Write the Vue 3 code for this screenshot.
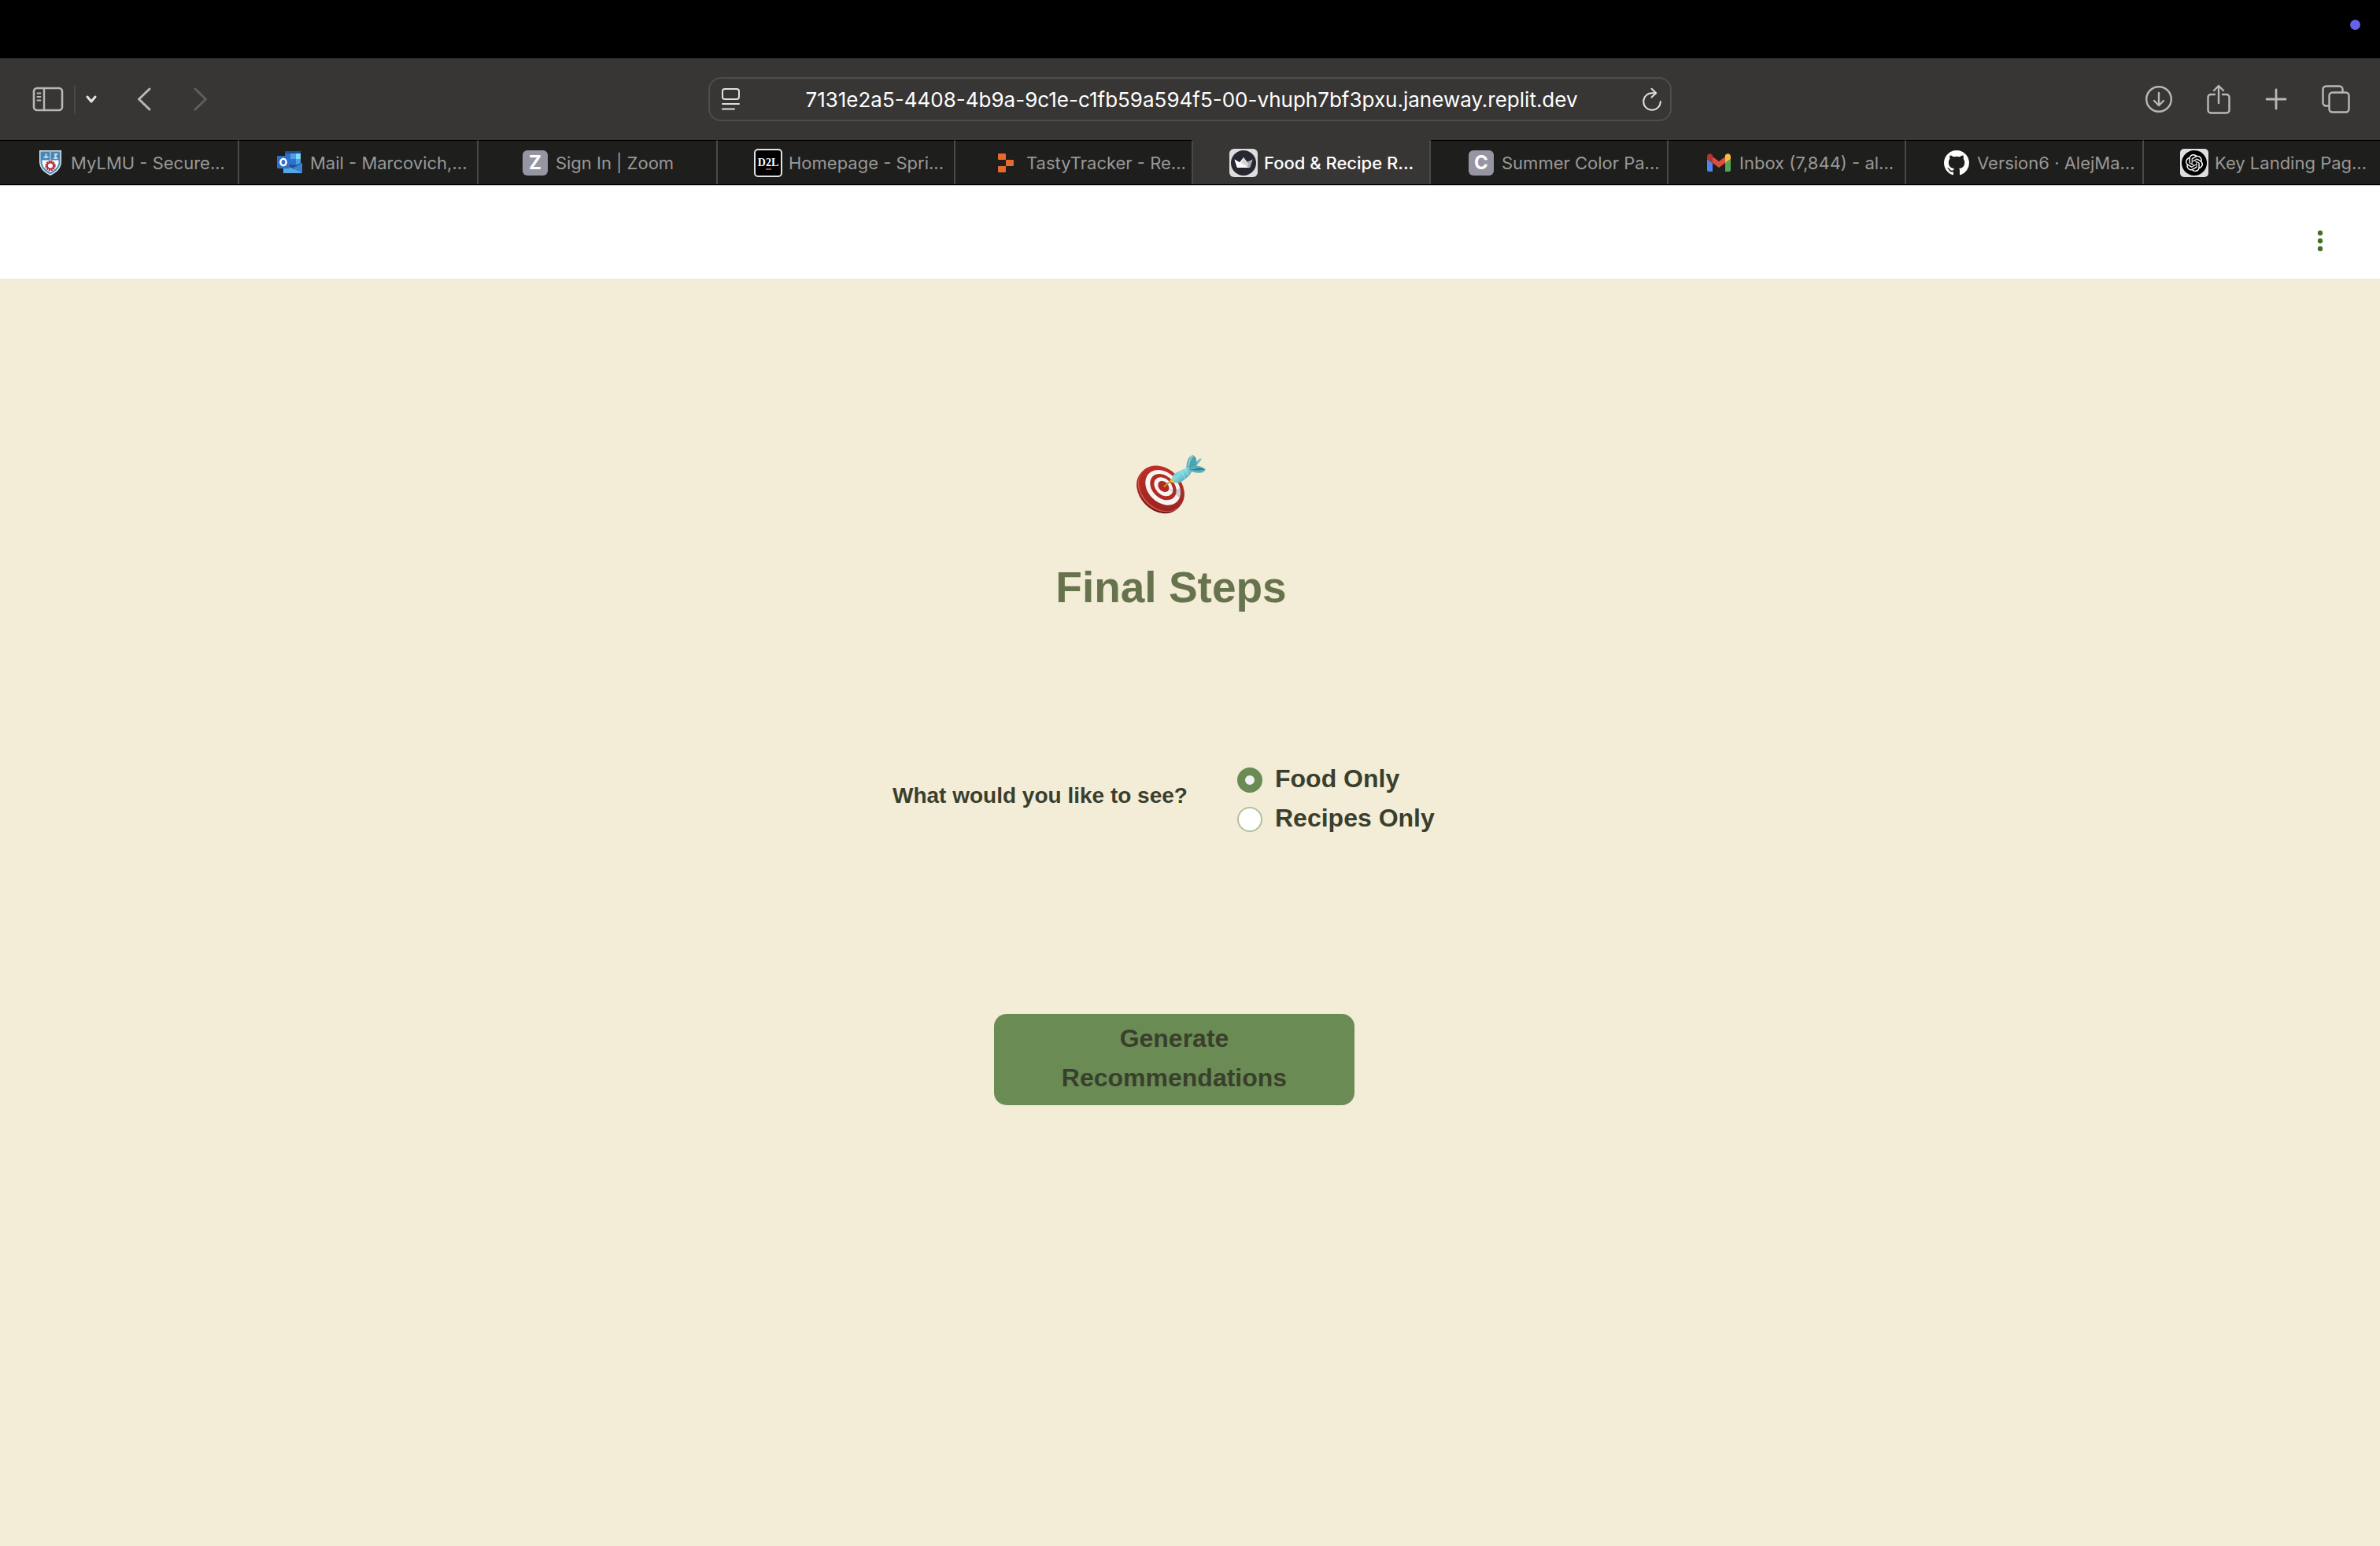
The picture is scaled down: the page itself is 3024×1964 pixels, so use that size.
<script setup>
import { ref } from 'vue'

const address = ref('7131e2a5-4408-4b9a-9c1e-c1fb59a594f5-00-vhuph7bf3pxu.janeway.replit.dev')
const choice = ref('food')

const tabs = [
  { icon: 'lmu', title: 'MyLMU - Secure...' },
  { icon: 'outlook', title: 'Mail - Marcovich,...' },
  { icon: 'letter', letter: 'Z', title: 'Sign In | Zoom', centered: true },
  { icon: 'd2l', title: 'Homepage - Spri...' },
  { icon: 'replit', title: 'TastyTracker - Re...' },
  { icon: 'crown', title: 'Food & Recipe R...', active: true },
  { icon: 'letter', letter: 'C', title: 'Summer Color Pa...' },
  { icon: 'gmail', title: 'Inbox (7,844) - al...' },
  { icon: 'github', title: 'Version6 · AlejMa...' },
  { icon: 'openai', title: 'Key Landing Pag...' },
]

const options = [
  { value: 'food', label: 'Food Only' },
  { value: 'recipes', label: 'Recipes Only' },
]
</script>

<template>
  <div class="screen">
    <div class="menubar"><span class="indicator"></span></div>

    <header class="toolbar">
      <div class="tools">
        <button class="tool" type="button" aria-label="Show sidebar">
          <svg width="40" height="32" viewBox="0 0 40 32" fill="none" stroke="#b9b8b6" stroke-width="2.6" stroke-linecap="round">
            <rect x="2" y="2" width="36" height="28" rx="4" />
            <path d="M15 2v28" stroke-width="2.4" />
            <path d="M6.500 8.500h4M6.500 13h4M6.500 17.500h4" stroke-width="1.900" />
          </svg>
        </button>
        <span class="rule"></span>
        <button class="tool caret" type="button" aria-label="Tab groups">
          <svg width="16" height="12" viewBox="0 0 16 12" fill="none" stroke="#e4e3e2" stroke-width="3" stroke-linecap="round" stroke-linejoin="round">
            <path d="M3 3l5 6 5-6" />
          </svg>
        </button>
        <button class="tool back" type="button" aria-label="Back">
          <svg width="20" height="32" viewBox="0 0 20 32" fill="none" stroke="#b9b8b6" stroke-width="3" stroke-linecap="round" stroke-linejoin="round">
            <path d="M17 3L3.500 16 17 29" />
          </svg>
        </button>
        <button class="tool forward" type="button" aria-label="Forward">
          <svg width="20" height="32" viewBox="0 0 20 32" fill="none" stroke="#5f5e5c" stroke-width="3" stroke-linecap="round" stroke-linejoin="round">
            <path d="M3 3l13.500 13L3 29" />
          </svg>
        </button>
      </div>

      <div class="field">
        <svg width="26" height="30" viewBox="0 0 26 30" fill="none" stroke="#e0dfde" stroke-width="2" stroke-linecap="round">
          <rect x="2" y="2" width="21" height="13" rx="3" />
          <path d="M2 21h21M2 27.500h15" />
        </svg>
        <input v-model="address" class="address" type="text" aria-label="Address" spellcheck="false" />
        <button class="tool" type="button" aria-label="Reload">
          <svg width="26" height="30" viewBox="0 0 26 30" fill="none" stroke="#e0dfde" stroke-width="2" stroke-linecap="round" stroke-linejoin="round">
            <path d="M17 7.200H13a10.800 10.800 0 1 0 10.800 10.800" />
            <path d="M12.500 1.800l5.700 5.400-5.700 5.400" />
          </svg>
        </button>
      </div>

      <div class="tools end">
        <button class="tool" type="button" aria-label="Downloads">
          <svg width="34" height="36" viewBox="1 0 34 36" fill="none" stroke="#b9b8b6" stroke-width="2.400" stroke-linecap="round" stroke-linejoin="round">
            <circle cx="18" cy="18" r="15.800" />
            <path d="M18 10v15.500M12 20l6 6 6-6" />
          </svg>
        </button>
        <button class="tool" type="button" aria-label="Share">
          <svg width="32" height="40" viewBox="0 0 32 40" fill="none" stroke="#b9b8b6" stroke-width="2.400" stroke-linecap="round" stroke-linejoin="round">
            <path d="M11 14H6a3.500 3.500 0 0 0-3.500 3.500V34A3.500 3.500 0 0 0 6 37.500h20a3.500 3.500 0 0 0 3.500-3.500V17.500A3.500 3.500 0 0 0 26 14h-5" />
            <path d="M16 25V3M10 9l6-6 6 6" />
          </svg>
        </button>
        <button class="tool" type="button" aria-label="New tab">
          <svg width="28" height="28" viewBox="0 0 28 28" fill="none" stroke="#b9b8b6" stroke-width="2.800" stroke-linecap="round">
            <path d="M14 2v24M2 14h24" />
          </svg>
        </button>
        <button class="tool" type="button" aria-label="Tab overview">
          <svg width="38" height="38" viewBox="0 0 38 38" fill="none" stroke="#b9b8b6" stroke-width="2.400" stroke-linejoin="round">
            <rect x="10.500" y="10.500" width="25" height="25" rx="4" />
            <path d="M10.500 27.500H6.500a4 4 0 0 1-4-4V6.500a4 4 0 0 1 4-4h17a4 4 0 0 1 4 4v4" />
          </svg>
        </button>
      </div>
    </header>

    <nav class="tabs" aria-label="Open tabs">
      <a
        v-for="tab in tabs"
        :key="tab.title"
        href="#"
        class="tab"
        :class="{ active: tab.active, centered: tab.centered }"
      >
        <span class="favicon">
          <svg v-if="tab.icon === 'lmu'" width="28" height="32" viewBox="0 0 28 32">
            <path d="M0 0h28v14c0 9-6 14-14 18C6 28 0 23 0 14z" fill="#dce7ef" />
            <path d="M1.500 1.500h25V14c0 8-5.500 12.700-12.500 16.300C7 26.700 1.500 22 1.500 14z" fill="#4685b8" />
            <path d="M3.500 12.500h21V14c0 7-4.700 10.900-10.500 14.100C8.200 24.900 3.500 21 3.500 14z" fill="#fff" />
            <path d="M14 2v11" stroke="#dce7ef" />
            <path d="M8.500 4v6M5.500 8.500h6M19 5h3l-2 2 2 3h-4" stroke="#c6dcec" stroke-width="1.800" fill="none" />
            <circle cx="14" cy="19.500" r="5.200" fill="#fff" stroke="#ac3543" stroke-width="3" stroke-dasharray="2 .7" />
            <circle cx="14" cy="19.500" r="4" fill="none" stroke="#ac3543" stroke-width="2" />
          </svg>
          <svg v-else-if="tab.icon === 'outlook'" width="32" height="34" viewBox="0 -2 32 34">
            <path d="M10 0h20v18H10z" fill="#2b6fc8" />
            <path d="M10 0h20v3H10z" fill="#214f94" />
            <path d="M17 3h7v7h-7zM24 10h6v7h-6z" fill="#4da0e8" />
            <path d="M24 3h6v7h-6z" fill="#7fdcfc" />
            <path d="M17 10h7v6h-7z" fill="#2b74cf" />
            <path d="M8 15l12 7 12-7v13H8z" fill="#52a7e8" />
            <path d="M15 17l6 6 11-7-2-1-9 4-5-3z" fill="#2459a8" />
            <path d="M20 22l12-7v13z" fill="#3a85cf" />
            <rect x="0" y="6" width="16" height="16" rx="1" fill="#2f6fc9" />
            <ellipse cx="8" cy="14" rx="3.600" ry="4.200" fill="none" stroke="#fff" stroke-width="2.500" />
          </svg>
          <span v-else-if="tab.icon === 'letter'" class="letter">{{ tab.letter }}</span>
          <span v-else-if="tab.icon === 'd2l'" class="d2l">D<span class="two">2</span>L</span>
          <svg v-else-if="tab.icon === 'replit'" width="20" height="24" viewBox="0 0 20 24" fill="#e56a2b">
            <path d="M1 0h8q1 0 1 1v7H1Q0 8 0 7V1q0-1 1-1zM10 8h9q1 0 1 1v6q0 1-1 1h-9zM1 16h9v7q0 1-1 1H1q-1 0-1-1v-6q0-1 1-1z" />
          </svg>
          <svg v-else-if="tab.icon === 'crown'" width="36" height="36" viewBox="0 0 36 36">
            <rect width="36" height="36" rx="6" fill="#dededf" />
            <circle cx="18" cy="18" r="16" fill="#262730" />
            <path d="M6.500 13.500l6 4.500 5.500-7 5.500 7 6-4.500-3.500 10.500H10z" fill="#fff" />
            <path d="M29.500 13.500L26 24h-4.500l-3.500-5z" fill="#a9aaae" />
            <path d="M18 11l5.500 7 1 2-3 4-7-4.500z" fill="#d5d5d7" />
            <path d="M6.500 13.500L18 20l7 4H10z" fill="#fff" />
          </svg>
          <svg v-else-if="tab.icon === 'gmail'" width="30" height="23" viewBox="0 0 30 23">
            <path d="M0 7l7 5v11H2q-2 0-2-2z" fill="#4f83ee" />
            <path d="M30 7l-7 5v11h5q2 0 2-2z" fill="#54a557" />
            <path d="M7 4l8 6 8-6v8l-8 6-8-6z" fill="#dc4c3f" />
            <path d="M0 7V4C0 0 4-1 7 2v10z" fill="#b8352b" />
            <path d="M30 7V4c0-4-4-5-7-2v10z" fill="#f3bf42" />
          </svg>
          <svg v-else-if="tab.icon === 'github'" width="32" height="32" viewBox="0 0 16 16" fill="#fff">
            <path d="M8 0C3.580 0 0 3.580 0 8c0 3.540 2.290 6.530 5.470 7.590.4.070.55-.17.55-.38 0-.19-.01-.82-.01-1.490-2.010.37-2.530-.49-2.690-.94-.09-.23-.48-.94-.82-1.130-.28-.15-.68-.52-.01-.53.63-.01 1.080.58 1.230.82.72 1.210 1.870.87 2.330.66.07-.52.28-.87.51-1.070-1.780-.2-3.640-.89-3.640-3.950 0-.87.31-1.590.82-2.150-.08-.2-.36-1.020.08-2.120 0 0 .67-.21 2.200.82.64-.18 1.320-.27 2-.27s1.360.09 2 .27c1.530-1.040 2.200-.82 2.200-.82.44 1.100.16 1.920.08 2.120.51.56.82 1.270.82 2.150 0 3.070-1.870 3.750-3.650 3.950.29.25.54.73.54 1.480 0 1.070-.01 1.930-.01 2.200 0 .21.15.46.55.38A8.010 8.010 0 0 0 16 8c0-4.420-3.580-8-8-8z" />
          </svg>
          <svg v-else width="36" height="36" viewBox="0 0 36 36">
            <rect width="36" height="36" rx="5" fill="#dededf" />
            <circle cx="18" cy="18" r="16" fill="#000" />
            <path transform="translate(7 7) scale(.92)" fill="#fff" d="M22.2819 9.8211a5.9847 5.9847 0 0 0-.5157-4.9108 6.0462 6.0462 0 0 0-6.5098-2.9A6.0651 6.0651 0 0 0 4.9807 4.1818a5.9847 5.9847 0 0 0-3.9977 2.9 6.0462 6.0462 0 0 0 .7427 7.0966 5.98 5.98 0 0 0 .511 4.9107 6.051 6.051 0 0 0 6.5146 2.9001A5.9847 5.9847 0 0 0 13.2599 24a6.0557 6.0557 0 0 0 5.7718-4.2058 5.9894 5.9894 0 0 0 3.9977-2.9001 6.0557 6.0557 0 0 0-.7475-7.0729zm-9.022 12.6081a4.4755 4.4755 0 0 1-2.8764-1.0408l.1419-.0804 4.7783-2.7582a.7948.7948 0 0 0 .3927-.6813v-6.7369l2.02 1.1686a.071.071 0 0 1 .038.052v5.5826a4.504 4.504 0 0 1-4.4945 4.4944zm-9.6607-4.1254a4.4708 4.4708 0 0 1-.5346-3.0137l.142.0852 4.783 2.7582a.7712.7712 0 0 0 .7806 0l5.8428-3.3685v2.3324a.0804.0804 0 0 1-.0332.0615L9.74 19.9502a4.4992 4.4992 0 0 1-6.1408-1.6464zM2.3408 7.8956a4.485 4.485 0 0 1 2.3655-1.9728V11.6a.7664.7664 0 0 0 .3879.6765l5.8144 3.3543-2.0201 1.1685a.0757.0757 0 0 1-.071 0l-4.8303-2.7865A4.504 4.504 0 0 1 2.3408 7.872zm16.5963 3.8558L13.1038 8.364 15.1192 7.2a.0757.0757 0 0 1 .071 0l4.8303 2.7913a4.4944 4.4944 0 0 1-.6765 8.1042v-5.6772a.79.79 0 0 0-.407-.667zm2.0107-3.0231l-.142-.0852-4.7735-2.7818a.7759.7759 0 0 0-.7854 0L9.409 9.2297V6.8974a.0662.0662 0 0 1 .0284-.0615l4.8303-2.7866a4.4992 4.4992 0 0 1 6.6802 4.66zM8.3065 12.863l-2.02-1.1638a.0804.0804 0 0 1-.038-.0567V6.0742a4.4992 4.4992 0 0 1 7.3757-3.4537l-.142.0805L8.704 5.459a.7948.7948 0 0 0-.3927.6813zm1.0976-2.3654l2.602-1.4998 2.6069 1.4998v2.9994l-2.5974 1.4997-2.6067-1.4997Z" />
          </svg>
        </span>
        <span class="title">{{ tab.title }}</span>
      </a>
    </nav>

    <div class="appbar">
      <button class="kebab" type="button" aria-label="Main menu">
        <svg width="8" height="28" viewBox="0 0 8 28" fill="#447026">
          <circle cx="4" cy="4" r="3.200" />
          <circle cx="4" cy="14" r="3.200" />
          <circle cx="4" cy="24" r="3.200" />
        </svg>
      </button>
    </div>

    <main class="page">
      <svg class="target" width="88" height="76" viewBox="0 0 264 228" role="img" aria-label="Direct hit">
        <defs>
          <linearGradient id="face" x1="0" y1="0" x2="1" y2="1">
            <stop offset="0" stop-color="#c93027" />
            <stop offset="1" stop-color="#932420" />
          </linearGradient>
          <linearGradient id="side" x1="0" y1="0" x2="1" y2="0">
            <stop offset="0" stop-color="#b3261f" />
            <stop offset="1" stop-color="#5f1210" />
          </linearGradient>
          <linearGradient id="barrel" x1="0" y1="0" x2="1" y2="1">
            <stop offset="0" stop-color="#56aebd" />
            <stop offset=".4" stop-color="#85dbe3" />
            <stop offset="1" stop-color="#3b8797" />
          </linearGradient>
        </defs>
        <ellipse cx="88" cy="135" rx="98" ry="76" transform="rotate(45 88 135)" fill="url(#side)" />
        <ellipse cx="93" cy="130" rx="98" ry="76" transform="rotate(45 93 130)" fill="#d0584d" />
        <ellipse cx="96" cy="127" rx="97" ry="75" transform="rotate(45 96 127)" fill="url(#face)" />
        <ellipse cx="101" cy="124" rx="76" ry="57" transform="rotate(45 101 124)" fill="#f6f5f4" />
        <ellipse cx="102" cy="122" rx="57" ry="42" transform="rotate(45 102 122)" fill="#b32a24" />
        <ellipse cx="103" cy="121" rx="41" ry="30" transform="rotate(45 103 121)" fill="#f6f5f4" />
        <ellipse cx="103" cy="120" rx="24" ry="18" transform="rotate(45 103 120)" fill="#b32a24" />
        <path d="M112 122l28 12 30-8 6 24-14 12-22-22z" fill="#555" opacity=".25" />
        <path d="M106 120l30-26" stroke="#c99f22" stroke-width="5" stroke-linecap="round" />
        <path d="M128 97l8-11 18 15-12 6-9-2z" fill="#e4c62f" />
        <path d="M207 60l6 0 34-42q1-6-6-4l-38 34z" fill="#6fb9c4" />
        <path d="M190 49Q192 6 216 1q18 8 12 44l-20 14z" fill="#4fa2af" />
        <path d="M197 44Q200 16 216 1" stroke="#7fd0d9" stroke-width="7" fill="none" />
        <path d="M137 84q2-12 22-20l38-18 14 18q-10 20-40 38-14 9-26 2-10-8-8-20z" fill="url(#barrel)" />
        <path d="M168 62q10 4 16 28M182 54q10 4 15 24" stroke="#b4edf0" stroke-width="3" opacity=".7" fill="none" />
        <path d="M199 56q22-20 42-13 14 4 22 12-6 18-40 12-14-2-24-11z" fill="#5bb2be" />
        <path d="M201 56q20-2 30-6 16-2 32 5-30 6-62 1z" fill="#347f8d" />
      </svg>
      <h1>Final Steps</h1>

      <form class="form" @submit.prevent>
        <div class="question" role="radiogroup" aria-labelledby="view-prompt">
          <span id="view-prompt" class="prompt">What would you like to see?</span>
          <div class="options">
            <label v-for="option in options" :key="option.value" class="option">
              <input v-model="choice" type="radio" name="view" :value="option.value" />
              <span class="caption">{{ option.label }}</span>
            </label>
          </div>
        </div>
        <button class="generate" type="submit">Generate Recommendations</button>
      </form>
    </main>
  </div>
</template>

<style>
body {
  margin: 0;
  background: #f3ecd7;
}
</style>

<style scoped>
.screen {
  display: flex;
  flex-direction: column;
  min-height: 100vh;
  font-family: "Liberation Sans", Arial, sans-serif;
}

button {
  margin: 0;
  padding: 0;
  border: 0;
  background: none;
  font: inherit;
}

svg {
  display: block;
}

.menubar {
  display: flex;
  justify-content: flex-end;
  align-items: flex-end;
  box-sizing: border-box;
  height: 74px;
  padding: 0 25px 36px 0;
  background: #000;
}

.indicator {
  width: 13px;
  height: 13px;
  border-radius: 50%;
  background: #6562ea;
}

.toolbar {
  display: grid;
  grid-template-columns: 1fr minmax(0, 1224px) 1fr;
  align-items: center;
  height: 104px;
  background: #383634;
}

.tools {
  display: flex;
  align-items: center;
  padding-left: 41px;
}

.tools.end {
  justify-content: flex-end;
  gap: 43px;
  padding: 0 37px 0 0;
}

.rule {
  width: 2px;
  height: 36px;
  margin: 0 12px 0 13px;
  background: #4a4846;
}

.back {
  margin-left: 49px;
}

.forward {
  margin-left: 52px;
}

.field {
  display: flex;
  align-items: center;
  box-sizing: border-box;
  height: 56px;
  padding: 0 10px 0 14px;
  border: 2px solid #4f4d4b;
  border-radius: 16px;
}

.address {
  flex: 1;
  min-width: 0;
  padding: 2px 0 0;
  border: 0;
  outline: 0;
  background: none;
  color: #fff;
  font: 400 26px/32px Inter, sans-serif;
  text-align: center;
}

.tabs {
  display: grid;
  grid-template-columns: repeat(3, 152fr) repeat(6, 151fr) 150fr;
  height: 57px;
  box-sizing: border-box;
  border-bottom: 1px solid #000;
  background: #1e1e1c;
}

.tab {
  display: flex;
  align-items: center;
  gap: 8px;
  min-width: 0;
  box-sizing: border-box;
  padding-left: 46px;
  border-top: 1px solid #000;
  border-right: 2px solid #4a4947;
  color: #9a9998;
  font: 400 22px/28px Inter, sans-serif;
  text-decoration: none;
  white-space: nowrap;
}

.tab:last-child {
  border-right: 0;
}

.tab.centered {
  justify-content: center;
  padding-left: 0;
}

.tab.active {
  border-top-color: #383634;
  background: #383634;
  color: #fff;
  font-weight: 500;
}

.favicon {
  display: flex;
  justify-content: center;
  flex: none;
  width: 36px;
}

.letter {
  width: 32px;
  border-radius: 6px;
  background: #9696a3;
  color: #fff;
  font: 700 24px/32px Inter, sans-serif;
  text-align: center;
}

.d2l {
  box-sizing: border-box;
  width: 36px;
  border: 2px solid #e2e2e2;
  border-radius: 5px;
  background: #000;
  color: #fff;
  font: 700 14px/32px "Liberation Serif", serif;
  text-align: center;
}

.two {
  border-bottom: 2px solid #a4532a;
}

.appbar {
  display: flex;
  justify-content: flex-end;
  align-items: center;
  box-sizing: border-box;
  height: 119px;
  padding: 22px 72px 0 0;
  border-top: 1px solid #c4c4c4;
  background: #fff;
}

.page {
  display: flex;
  flex: 1;
  flex-direction: column;
  align-items: center;
  padding: 224px 48px 0 0;
  background: #f3ecd7;
  color: #3a3f2d;
}

h1 {
  margin: 56px 0 0;
  color: #67734c;
  font-size: 55px;
  line-height: 72px;
}

.form {
  display: flex;
  flex-direction: column;
  align-items: center;
}

.question {
  display: grid;
  grid-template-columns: 438px 270px;
  align-items: center;
  margin-top: 184px;
}

.prompt {
  padding-bottom: 10px;
  font-size: 28px;
  font-weight: 700;
  line-height: 32px;
}

.option {
  display: flex;
  align-items: center;
  gap: 16px;
  height: 50px;
}

.caption {
  align-self: flex-start;
  font-size: 32px;
  font-weight: 700;
  line-height: 46px;
}

.option input {
  appearance: none;
  flex: none;
  width: 32px;
  height: 32px;
  margin: 0;
  border: 2px solid #b2c09b;
  border-radius: 50%;
  background: #fff;
}

.option input:checked {
  border: 10px solid #6a8c54;
  background: #f0f2f6;
}

.generate {
  width: 458px;
  margin: 222px 0 0 8px;
  padding: 6px 64px 10px;
  border-radius: 16px;
  background: #6a8c54;
  color: #3a3f2d;
  font-size: 32px;
  font-weight: 700;
  line-height: 50px;
}
</style>
